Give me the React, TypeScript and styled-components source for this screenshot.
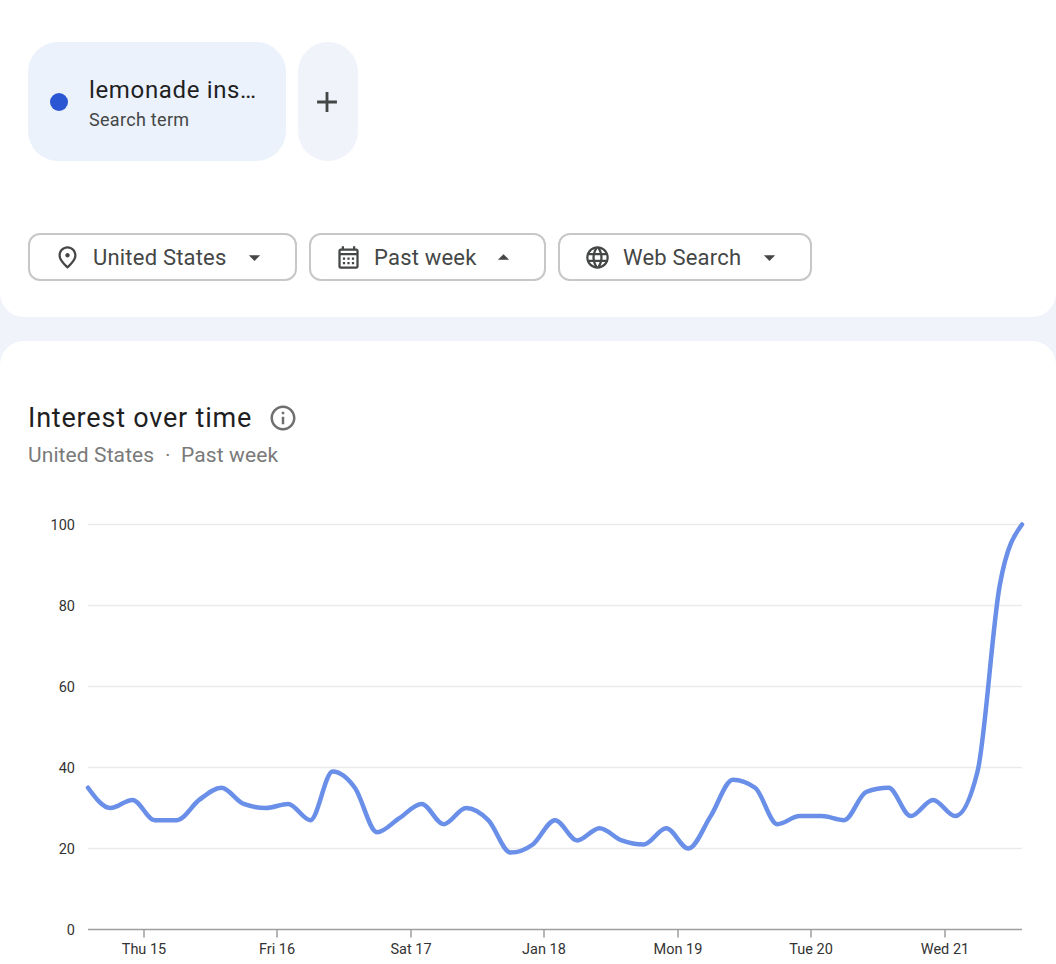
import React from 'react';
import styled, { createGlobalStyle } from 'styled-components';
import {
  MdAdd,
  MdArrowDropDown,
  MdArrowDropUp,
  MdInfoOutline,
  MdLanguage,
  MdOutlineCalendarMonth,
  MdOutlinePlace,
} from 'react-icons/md';

const FONT = '"Roboto", "Liberation Sans", sans-serif';

const GlobalStyle = createGlobalStyle`
  html, body {
    margin: 0;
    padding: 0;
    background: #f0f3f9;
    font-family: ${FONT};
  }
`;

const Page = styled.div`
  width: 1056px;
  height: 964px;
  overflow: hidden;
  display: flex;
  flex-direction: column;
  gap: 24px;
`;

const TopCard = styled.section`
  height: 317px;
  box-sizing: border-box;
  padding: 42px 28px 0;
  background: #fff;
  border-radius: 0 0 24px 24px;
  display: flex;
  flex-direction: column;
  gap: 72px;
`;

const ChipRow = styled.div`
  display: flex;
  gap: 12px;
`;

const TermChip = styled.div`
  width: 258px;
  height: 119px;
  box-sizing: border-box;
  padding: 0 22px;
  background: #ebf2fc;
  border-radius: 30px;
  display: flex;
  align-items: center;
  gap: 21px;
`;

const Dot = styled.span`
  width: 18px;
  height: 18px;
  border-radius: 50%;
  background: #2a56d4;
  flex: 0 0 18px;
`;

const TermText = styled.div`
  display: flex;
  flex-direction: column;
  gap: 4px;
  padding-top: 2px;
`;

const TermName = styled.div`
  font-size: 24px;
  line-height: 30px;
  color: #1f1f1f;
  letter-spacing: 0.65px;
  white-space: nowrap;
`;

const TermKind = styled.div`
  font-size: 18px;
  line-height: 22px;
  color: #444746;
  letter-spacing: 0.3px;
`;

const AddButton = styled.div`
  width: 60px;
  height: 119px;
  box-sizing: border-box;
  padding-right: 2px;
  background: #f0f3f9;
  border-radius: 30px;
  display: flex;
  align-items: center;
  justify-content: center;
  color: #444746;
  font-size: 34px;
`;

const FilterRow = styled.div`
  display: flex;
  gap: 12px;
`;

const Filter = styled.div<{ $width: number }>`
  width: ${({ $width }) => $width}px;
  height: 48px;
  box-sizing: border-box;
  border: 2px solid #c7c7c7;
  border-radius: 12px;
  padding: 0 27px 0 24px;
  display: flex;
  align-items: center;
  color: #444746;
  font-size: 27px;
`;

const FilterLabel = styled.span`
  font-size: 22px;
  letter-spacing: 0.2px;
  margin-left: 12px;
  margin-right: auto;
  white-space: nowrap;
`;

const ChartCard = styled.section`
  flex: 1;
  background: #fff;
  border-radius: 24px 24px 0 0;
  padding-top: 60px;
`;

const Heading = styled.div`
  padding-left: 28px;
  display: flex;
  align-items: center;
  gap: 16px;
  height: 34px;
`;

const Title = styled.h2`
  margin: 0;
  font-size: 27px;
  font-weight: 400;
  color: #1f1f1f;
  letter-spacing: 0.8px;
`;

const InfoIcon = styled(MdInfoOutline)`
  font-size: 30px;
  color: #6f6f6f;
`;

const Subtitle = styled.div`
  padding-left: 28px;
  margin-top: 6px;
  font-size: 21px;
  line-height: 28px;
  color: #7a7a7a;
  letter-spacing: 0.1px;
`;

const Chart = styled.svg`
  display: block;
  margin-top: 31px;
`;

const AxisText = styled.text`
  font-family: ${FONT};
  font-size: 14.5px;
  fill: #333;
`;

// chart area in page coordinates, svg starts at y=500
const TOP = 500;
const X0 = 88;
const X1 = 1022;
const Y0 = 929.5 - TOP;
const UNIT = 4.05;

const DATA = [
  35, 30, 32, 27, 27, 32, 35, 31, 30, 31, 27, 39, 35, 24, 27.5, 31, 26, 30, 27, 19, 21,
  27, 22, 25, 22, 21, 25, 20, 28, 37, 35, 26, 28, 28, 27, 34, 35, 28, 32, 28, 39, 85, 100,
];

const TICKS = [
  { x: 144, label: 'Thu 15' },
  { x: 277, label: 'Fri 16' },
  { x: 411, label: 'Sat 17' },
  { x: 544, label: 'Jan 18' },
  { x: 678, label: 'Mon 19' },
  { x: 811, label: 'Tue 20' },
  { x: 945, label: 'Wed 21' },
];

// monotone cubic through the points, same tangents as d3 curveMonotoneX
const linePath = (values: number[]) => {
  const step = (X1 - X0) / (values.length - 1);
  const pts = values.map((v, i) => [X0 + i * step, Y0 - v * UNIT]);
  const slope = pts.slice(0, -1).map((p, i) => (pts[i + 1][1] - p[1]) / step);
  const last = pts.length - 1;
  const tan = pts.map((_, i) => {
    if (i === 0 || i === last) return 0;
    const a = slope[i - 1];
    const b = slope[i];
    const p = (a + b) / 2;
    return (Math.sign(a) + Math.sign(b)) * Math.min(Math.abs(a), Math.abs(b), Math.abs(p) / 2);
  });
  tan[0] = (3 * slope[0] - tan[1]) / 2;
  tan[last] = (3 * slope[last - 1] - tan[last - 1]) / 2;
  let d = `M${pts[0][0]} ${pts[0][1]}`;
  for (let i = 0; i < last; i++) {
    const [x, y] = pts[i];
    const [nx, ny] = pts[i + 1];
    d += `C${x + step / 3} ${y + (tan[i] * step) / 3} ${nx - step / 3} ${ny - (tan[i + 1] * step) / 3} ${nx} ${ny}`;
  }
  return d;
};

const InterestChart: React.FC = () => (
  <Chart width={1056} height={464} viewBox="0 0 1056 464">
    {[100, 80, 60, 40, 20].map((v) => (
      <line key={v} x1={X0} x2={X1} y1={Y0 - v * UNIT} y2={Y0 - v * UNIT} stroke="#ebebeb" strokeWidth={1.5} />
    ))}
    {[100, 80, 60, 40, 20, 0].map((v) => (
      <AxisText key={v} x={75} y={Y0 - v * UNIT + 5} textAnchor="end">{v}</AxisText>
    ))}
    <line x1={X0} x2={X1} y1={Y0} y2={Y0} stroke="#9e9e9e" strokeWidth={1.5} />
    {TICKS.map((t) => (
      <g key={t.label}>
        <line x1={t.x} x2={t.x} y1={Y0} y2={Y0 + 8} stroke="#9e9e9e" strokeWidth={1.5} />
        <AxisText x={t.x} y={Y0 + 24} textAnchor="middle">{t.label}</AxisText>
      </g>
    ))}
    <path d={linePath(DATA)} fill="none" stroke="#6a8fe8" strokeWidth={4.5} strokeLinecap="round" strokeLinejoin="round" />
  </Chart>
);

const App: React.FC = () => (
  <Page>
    <GlobalStyle />
    <TopCard>
      <ChipRow>
        <TermChip>
          <Dot />
          <TermText>
            <TermName>lemonade ins…</TermName>
            <TermKind>Search term</TermKind>
          </TermText>
        </TermChip>
        <AddButton><MdAdd /></AddButton>
      </ChipRow>
      <FilterRow>
        <Filter $width={269}>
          <MdOutlinePlace />
          <FilterLabel>United States</FilterLabel>
          <MdArrowDropDown />
        </Filter>
        <Filter $width={237}>
          <MdOutlineCalendarMonth />
          <FilterLabel>Past week</FilterLabel>
          <MdArrowDropUp />
        </Filter>
        <Filter $width={254}>
          <MdLanguage />
          <FilterLabel>Web Search</FilterLabel>
          <MdArrowDropDown />
        </Filter>
      </FilterRow>
    </TopCard>
    <ChartCard>
      <Heading>
        <Title>Interest over time</Title>
        <InfoIcon />
      </Heading>
      <Subtitle>United States &nbsp;·&nbsp; Past week</Subtitle>
      <InterestChart />
    </ChartCard>
  </Page>
);

export default App;
